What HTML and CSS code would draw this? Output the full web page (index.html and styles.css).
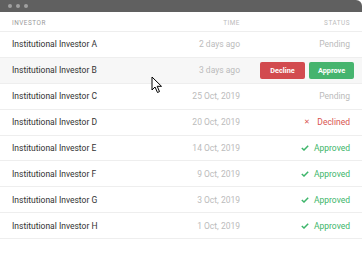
FILE: index.html
```html
<!DOCTYPE html>
<html lang="en">
<head>
    <meta charset="UTF-8" />
    <title>Investors</title>
    <link rel="stylesheet" href="styles.css">
</head>
<body>
    <div class="window">
        <div class="titlebar">
            <span class="dot"></span>
            <span class="dot"></span>
            <span class="dot"></span>
        </div>

        <div class="table">
            <div class="row head">
                <div class="name">Investor</div>
                <div class="time">Time</div>
                <div class="status">Status</div>
            </div>

            <div class="row">
                <div class="name">Institutional Investor A</div>
                <div class="time">2 days ago</div>
                <div class="status pending">Pending</div>
            </div>

            <div class="row hover">
                <div class="name">Institutional Investor B</div>
                <div class="time">3 days ago</div>
                <div class="status actions">
                    <button class="btn decline">Decline</button>
                    <button class="btn approve">Approve</button>
                </div>
                <svg class="cursor" width="12" height="18" viewBox="0 0 12 18">
                    <path d="M1 1 L1 14 L4 11 L6.5 16.5 L8.5 15.6 L6.2 10.3 L10.5 10.3 Z" fill="#fff" stroke="#000" stroke-width="1" stroke-linejoin="round" />
                </svg>
            </div>

            <div class="row">
                <div class="name">Institutional Investor C</div>
                <div class="time">25 Oct, 2019</div>
                <div class="status pending">Pending</div>
            </div>

            <div class="row">
                <div class="name">Institutional Investor D</div>
                <div class="time">20 Oct, 2019</div>
                <div class="status declined"><span class="icon">✕</span>Declined</div>
            </div>

            <div class="row">
                <div class="name">Institutional Investor E</div>
                <div class="time">14 Oct, 2019</div>
                <div class="status approved">
                    <svg class="check" width="8" height="6" viewBox="0 0 8 6"><path d="M0.8 3 L3 5 L7.2 0.8" fill="none" stroke="currentColor" stroke-width="1.5" /></svg>Approved
                </div>
            </div>

            <div class="row">
                <div class="name">Institutional Investor F</div>
                <div class="time">9 Oct, 2019</div>
                <div class="status approved">
                    <svg class="check" width="8" height="6" viewBox="0 0 8 6"><path d="M0.8 3 L3 5 L7.2 0.8" fill="none" stroke="currentColor" stroke-width="1.5" /></svg>Approved
                </div>
            </div>

            <div class="row">
                <div class="name">Institutional Investor G</div>
                <div class="time">3 Oct, 2019</div>
                <div class="status approved">
                    <svg class="check" width="8" height="6" viewBox="0 0 8 6"><path d="M0.8 3 L3 5 L7.2 0.8" fill="none" stroke="currentColor" stroke-width="1.5" /></svg>Approved
                </div>
            </div>

            <div class="row">
                <div class="name">Institutional Investor H</div>
                <div class="time">1 Oct, 2019</div>
                <div class="status approved">
                    <svg class="check" width="8" height="6" viewBox="0 0 8 6"><path d="M0.8 3 L3 5 L7.2 0.8" fill="none" stroke="currentColor" stroke-width="1.5" /></svg>Approved
                </div>
            </div>
        </div>
    </div>
</body>
</html>
```

FILE: styles.css
```css
body {
    margin: 0;
    padding: 0;
    background: #FFFFFF;
    font-family: Roboto, Arial, sans-serif;
    color: #333333;
}

.window {
    width: 362px;
    height: 274px;
    background: #FFFFFF;
    overflow: hidden;
}

.titlebar {
    height: 12px;
    background: #606060;
    border-radius: 0 6px 0 0;
    display: flex;
    align-items: center;
    gap: 4px;
    padding-left: 8px;
}

.dot {
    width: 4px;
    height: 4px;
    border-radius: 50%;
    background: #a0a0a0;
}

.row {
    display: flex;
    align-items: center;
    height: 25.9px;
    padding: 0 12px;
    border-bottom: 1px solid #EEEEEE;
    box-sizing: border-box;
    position: relative;
    font-size: 8.5px;
}

.row.head {
    height: 20px;
    padding-top: 2px;
    font-size: 6.4px;
    letter-spacing: 0.5px;
    text-transform: uppercase;
    color: #999999;
}

.row.hover {
    background: #F7F7F7;
}

.name {
    flex: 1;
}

.time {
    width: 100px;
    text-align: right;
    color: #BBBBBB;
}

.status {
    width: 110px;
    display: flex;
    justify-content: flex-end;
    align-items: center;
    color: #BBBBBB;
}

.status.declined {
    color: #D9534F;
}

.status.approved {
    color: #3DB56A;
}

.icon {
    font-size: 7px;
    margin-right: 7px;
}

.check {
    margin-right: 5px;
}

.actions {
    gap: 4px;
    margin-left: 4px;
    margin-right: -4px;
}

.btn {
    border: none;
    border-radius: 2px;
    height: 17px;
    width: 45px;
    padding: 0;
    font-family: Roboto, Arial, sans-serif;
    font-size: 7.3px;
    font-weight: bold;
    color: #FFFFFF;
}

.btn.decline {
    background: #D24B4F;
}

.btn.approve {
    background: #46B46E;
}

.cursor {
    position: absolute;
    left: 151px;
    top: 18px;
}
```
